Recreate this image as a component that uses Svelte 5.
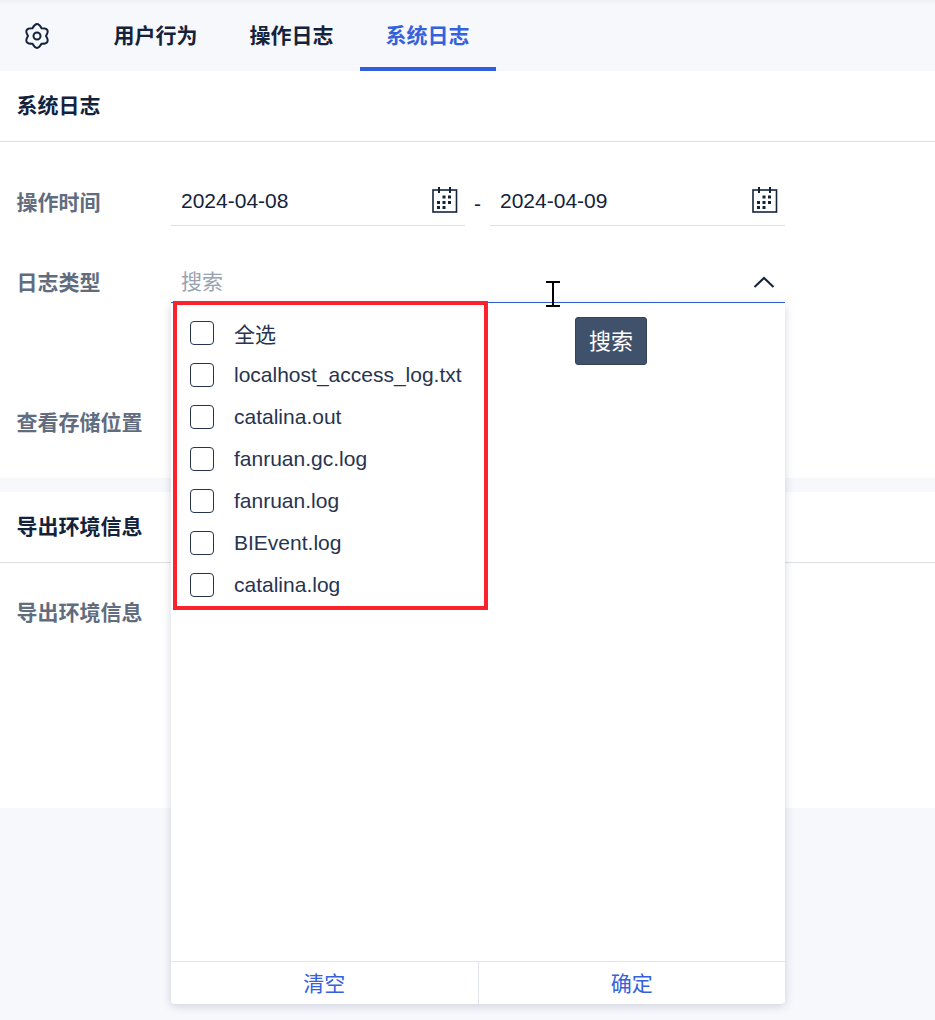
<script>
	const logFiles = [
		'全选',
		'localhost_access_log.txt',
		'catalina.out',
		'fanruan.gc.log',
		'fanruan.log',
		'BIEvent.log',
		'catalina.log'
	];
	const dots = [
		[10.5, 8.5], [16, 8.5], [5, 14], [10.5, 14], [16, 14], [5, 19], [10.5, 19]
	];
</script>

{#snippet calendar()}
	<svg class="calendar" width="26" height="26" viewBox="0 0 26 26" aria-hidden="true">
		<rect x="1" y="3" width="23.5" height="22" fill="none" stroke="#14233c" stroke-width="1.6" />
		<path d="M7 0v6M18 0v6" stroke="#14233c" stroke-width="2" />
		{#each dots as [x, y]}
			<rect {x} {y} width="3" height="3" fill="#14233c" />
		{/each}
	</svg>
{/snippet}

<div class="page">
	<nav class="tabs">
		<div class="gear">
			<svg width="26" height="26" viewBox="0 0 26 26" aria-hidden="true">
				<path
					d="M17.5 5.2Q13-3 8.5 5.2Q-.9 5 4 13Q-.9 21 8.5 20.8Q13 29 17.5 20.8Q26.9 21 22 13Q26.9 5 17.5 5.2Z"
					fill="none"
					stroke="#14233c"
					stroke-width="2"
					stroke-linejoin="round"
				/>
				<circle cx="13" cy="13" r="3.5" fill="none" stroke="#14233c" stroke-width="2" />
			</svg>
		</div>
		<div class="tab">用户行为</div>
		<div class="tab">操作日志</div>
		<div class="tab active">系统日志</div>
	</nav>

	<section class="card first">
		<h2 class="card-title">系统日志</h2>
		<div class="form">
			<div class="row date-row">
				<span class="label">操作时间</span>
				<div class="date-input"><span>2024-04-08</span>{@render calendar()}</div>
				<span class="dash">-</span>
				<div class="date-input"><span>2024-04-09</span>{@render calendar()}</div>
			</div>
			<div class="row type-row">
				<span class="label">日志类型</span>
				<div class="select-wrap">
					<div class="select-input">
						<span class="placeholder">搜索</span>
						<svg class="chevron" width="22" height="12" viewBox="0 0 22 12" aria-hidden="true">
							<path d="M1.5 11L11 2l9.5 9" fill="none" stroke="#14233c" stroke-width="2" />
						</svg>
					</div>
					<div class="dropdown">
						<div class="options">
							{#each logFiles as name}
								<label class="option"><span class="box"></span><span>{name}</span></label>
							{/each}
						</div>
						<div class="dropdown-footer">
							<button class="foot-btn">清空</button>
							<button class="foot-btn">确定</button>
						</div>
					</div>
					<div class="highlight"></div>
					<svg class="ibeam" width="14" height="26" viewBox="0 0 14 26" aria-hidden="true">
						<path d="M0 1h14M0 25h14M7 1v24" fill="none" stroke="#000" stroke-width="2" />
					</svg>
				</div>
			</div>
			<div class="button-row"><button class="search">搜索</button></div>
			<div class="row storage-row"><span class="label">查看存储位置</span></div>
		</div>
	</section>

	<section class="card second">
		<h2 class="card-title">导出环境信息</h2>
		<div class="row env-row"><span class="label">导出环境信息</span></div>
	</section>
</div>

<style>
	:global(body) {
		margin: 0;
		background: #f7f8fc;
	}

	.page {
		height: 1020px;
		overflow: hidden;
		box-sizing: border-box;
		font-family: "Liberation Sans", "Noto Sans CJK SC", sans-serif;
		font-size: 21px;
		color: #14233c;
		background: #f7f8fc;
	}

	.tabs {
		display: flex;
		height: 71px;
		box-sizing: border-box;
		background: linear-gradient(#f0f1f4, #f7f8fc 5px);
	}

	.gear {
		width: 88px;
		padding-left: 24px;
		box-sizing: border-box;
		display: flex;
		align-items: center;
		height: 71px;
	}

	.tab {
		width: 136px;
		padding-right: 1px;
		text-align: center;
		font-size: 21px;
		font-weight: 700;
		line-height: 71px;
		height: 71px;
		box-sizing: border-box;
	}

	.tab.active {
		color: #3562dc;
		border-bottom: 4px solid #2f5fdb;
	}

	.card {
		background: #fff;
	}

	.first {
		height: 407px;
		margin-bottom: 14px;
	}

	.second {
		height: 316px;
	}

	.card-title {
		margin: 0;
		height: 71px;
		box-sizing: border-box;
		padding-left: 16.5px;
		font-size: 21px;
		font-weight: 700;
		line-height: 70px;
		border-bottom: 1px solid #dfe0e4;
	}

	.form {
		padding-top: 37px;
	}

	.row {
		display: flex;
		align-items: center;
		padding-left: 16.5px;
	}

	.label {
		width: 154.5px;
		flex: none;
		font-size: 21px;
		font-weight: 700;
		color: #616d7e;
	}

	.date-row {
		height: 47px;
	}

	.date-row .label {
		padding-bottom: 4px;
	}

	.date-input {
		width: 294px;
		height: 47px;
		box-sizing: border-box;
		display: flex;
		align-items: center;
		justify-content: space-between;
		padding: 0 7px 3px 10px;
		border-bottom: 1px solid #dfe0e4;
	}

	.calendar {
		margin-bottom: 2px;
	}

	.date-input + .dash + .date-input {
		width: 295px;
	}

	.dash {
		width: 25px;
		text-align: center;
		padding-top: 3px;
	}

	.type-row {
		margin-top: 30px;
		height: 47px;
		position: relative;
		z-index: 2;
	}

	.type-row .label {
		padding-top: 3px;
	}

	.select-wrap {
		position: relative;
		width: 614px;
		height: 47px;
	}

	.select-input {
		height: 47px;
		box-sizing: border-box;
		display: flex;
		align-items: center;
		justify-content: space-between;
		padding: 6px 10px 0 10px;
		border-bottom: 1px solid #2f5fdb;
		line-height: 38px;
	}

	.placeholder {
		color: #98a2b1;
	}

	.dropdown {
		position: absolute;
		left: 0;
		right: 0;
		top: 47px;
		height: 701px;
		display: flex;
		flex-direction: column;
		background: #fff;
		border-radius: 0 0 4px 4px;
		box-shadow: 0 2px 10px rgba(40, 50, 90, 0.2);
	}

	.options {
		flex: 1;
		padding-top: 9px;
	}

	.option {
		display: flex;
		align-items: center;
		height: 42px;
		padding-left: 19px;
		gap: 20px;
		color: #27344f;
	}

	.box {
		width: 24px;
		height: 24px;
		box-sizing: border-box;
		border: 1px solid #27344f;
		border-radius: 4px;
	}

	.dropdown-footer {
		display: flex;
		height: 42px;
		border-top: 1px solid #e3e5ec;
		margin-top: 1px;
	}

	.foot-btn {
		flex: 1;
		padding: 0 0 2px;
		border: 0;
		background: none;
		font: inherit;
		color: #3562dc;
	}

	.foot-btn + .foot-btn {
		border-left: 1px solid #e3e5ec;
	}

	.highlight {
		position: absolute;
		left: 2px;
		top: 45px;
		width: 315px;
		height: 309px;
		box-sizing: border-box;
		border: 4px solid #fa232d;
		pointer-events: none;
	}

	.ibeam {
		position: absolute;
		left: 375px;
		top: 25px;
	}

	.button-row {
		position: relative;
		z-index: 3;
		height: 48px;
		margin-top: 14px;
		padding-left: 575px;
	}

	.search {
		width: 72px;
		height: 48px;
		padding: 0 0 4px;
		border: 1px solid #35435a;
		border-radius: 3px;
		background: #3f516b;
		color: #fff;
		font: inherit;
		font-size: 22px;
	}

	.storage-row {
		margin-top: 41px;
		height: 30px;
	}

	.env-row {
		height: 100px;
		padding-bottom: 5px;
		box-sizing: border-box;
	}
</style>
